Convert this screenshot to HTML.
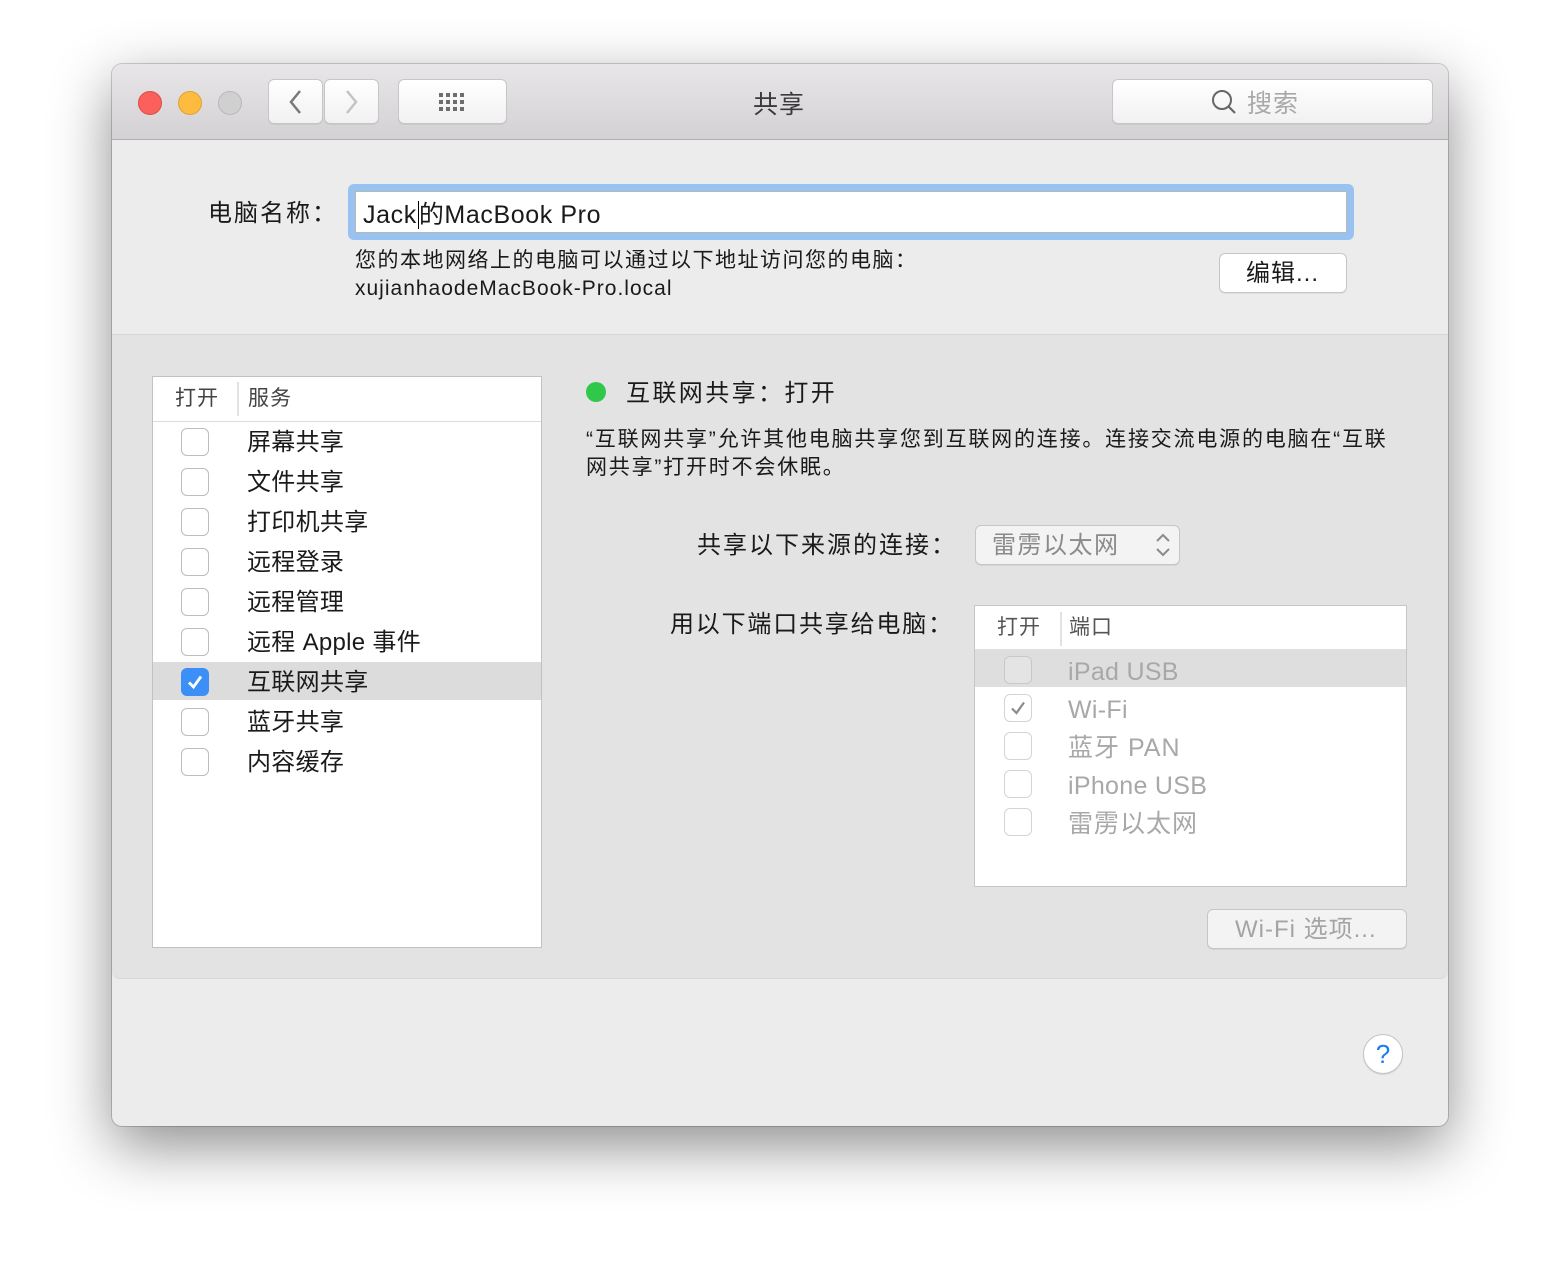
<!DOCTYPE html>
<html><head><meta charset="utf-8"><style>
*{margin:0;padding:0;box-sizing:border-box}
body{width:1560px;height:1286px;background:#fff;position:relative;overflow:hidden;font-family:"Liberation Sans","Noto Sans CJK SC",sans-serif;color:#1a1a1a;line-height:1.35}
.a{position:absolute;white-space:nowrap}
#win{position:absolute;left:112px;top:64px;width:1336px;height:1062px;background:#ececec;border-radius:10px;box-shadow:0 20px 60px rgba(0,0,0,.45),0 0 0 1px rgba(0,0,0,.18);overflow:hidden}
#tb{position:absolute;left:0;top:0;width:1336px;height:76px;background:linear-gradient(#e8e6e8,#d3d1d3);border-bottom:1px solid #b0aeb0}
.dot{position:absolute;top:27px;width:24px;height:24px;border-radius:50%}
.btn{position:absolute;background:linear-gradient(#fff,#f1f1f1);border:1px solid #c6c6c6;border-radius:6px;box-shadow:0 1px 0 rgba(0,0,0,.06)}
.cb{position:absolute;width:28px;height:28px;border:1px solid #bdbdbd;border-radius:6px;background:#fff}
.li{position:absolute;left:94px;font-size:24px;letter-spacing:0.3px}
.pl{position:absolute;left:93px;font-size:25px;color:#a8a8a8;letter-spacing:0.3px}
</style></head><body>
<div id="win">
<div id="tb">
 <div class="dot" style="left:26px;background:#fc605c;border:1px solid #de4a45"></div>
 <div class="dot" style="left:66px;background:#fdbc40;border:1px solid #dea236"></div>
 <div class="dot" style="left:106px;background:#d0d0d0;border:1px solid #b8b8b8"></div>
 <div class="btn" style="left:156px;top:15px;width:55px;height:45px"><svg width="55" height="45" style="position:absolute;left:0;top:0"><path d="M31 11 L22 22 L31 33" fill="none" stroke="#7a7a7a" stroke-width="2.5"/></svg></div>
 <div class="btn" style="left:212px;top:15px;width:55px;height:45px"><svg width="55" height="45" style="position:absolute;left:0;top:0"><path d="M22 11 L31 22 L22 33" fill="none" stroke="#c4c4c4" stroke-width="2.5"/></svg></div>
 <div class="btn" style="left:286px;top:15px;width:109px;height:45px"><svg width="109" height="45" style="position:absolute;left:0;top:0" fill="#6e6e6e"><rect x="40" y="13" width="4" height="4"/><rect x="47" y="13" width="4" height="4"/><rect x="54" y="13" width="4" height="4"/><rect x="61" y="13" width="4" height="4"/><rect x="40" y="20" width="4" height="4"/><rect x="47" y="20" width="4" height="4"/><rect x="54" y="20" width="4" height="4"/><rect x="61" y="20" width="4" height="4"/><rect x="40" y="27" width="4" height="4"/><rect x="47" y="27" width="4" height="4"/><rect x="54" y="27" width="4" height="4"/><rect x="61" y="27" width="4" height="4"/></svg></div>
 <div class="a" style="left:641px;top:25px;font-size:25px;color:#3a3a3a;letter-spacing:1px">共享</div>
 <div class="btn" style="left:1000px;top:15px;width:321px;height:45px"><svg width="30" height="30" style="position:absolute;left:97px;top:8px"><circle cx="12" cy="12" r="9" fill="none" stroke="#666" stroke-width="2"/><path d="M18.5 18.5 L25 25" stroke="#666" stroke-width="2.2"/></svg><div class="a" style="left:134px;top:8px;font-size:25px;color:#a8a8a8;letter-spacing:1px">搜索</div></div>
</div>
<div class="a" style="left:96px;top:134px;font-size:24px;letter-spacing:2px">电脑名称：</div>
<div style="position:absolute;left:236px;top:120px;width:1006px;height:56px;border-radius:6px;background:#98c3f1"></div>
<div style="position:absolute;left:243px;top:127px;width:992px;height:42px;background:#fff;border:1px solid #b8b8b8"></div>
<div class="a" style="left:251px;top:135px;font-size:25px;letter-spacing:0.6px">Jack<span style="border-left:1.5px solid #000;margin-left:1px"></span>的MacBook Pro</div>
<div class="a" style="left:243px;top:183px;font-size:21px;line-height:28px;letter-spacing:1px"><span style="letter-spacing:1.5px">您的本地网络上的电脑可以通过以下地址访问您的电脑：</span><br>xujianhaodeMacBook-Pro.local</div>
<div class="btn" style="left:1107px;top:189px;width:128px;height:40px;background:#fff"><div class="a" style="left:26px;top:4px;font-size:24px;letter-spacing:1px">编辑...</div></div>

<div style="position:absolute;left:0;top:270px;width:1336px;height:645px;background:#e3e3e3;border-top:1px solid #d6d6d6;border-bottom:1px solid #d8d8d8;border-radius:0 0 8px 8px"></div>

<div style="position:absolute;left:40px;top:312px;width:390px;height:572px;background:#fff;border:1px solid #c2c2c2">
 <div style="position:absolute;left:0;top:0;width:388px;height:45px;border-bottom:1px solid #dcdcdc"></div>
 <div class="a" style="left:22px;top:8px;font-size:21px;color:#444;letter-spacing:1px">打开</div>
 <div style="position:absolute;left:84px;top:5px;width:2px;height:34px;background:#e2e2e2"></div>
 <div class="a" style="left:95px;top:8px;font-size:21px;color:#444;letter-spacing:1px">服务</div>
 <div style="position:absolute;left:0;top:285px;width:388px;height:38px;background:#dcdcdc"></div>
 <div class="cb" style="left:28px;top:51px"></div><div class="li" style="top:50px">屏幕共享</div>
 <div class="cb" style="left:28px;top:91px"></div><div class="li" style="top:90px">文件共享</div>
 <div class="cb" style="left:28px;top:131px"></div><div class="li" style="top:130px">打印机共享</div>
 <div class="cb" style="left:28px;top:171px"></div><div class="li" style="top:170px">远程登录</div>
 <div class="cb" style="left:28px;top:211px"></div><div class="li" style="top:210px">远程管理</div>
 <div class="cb" style="left:28px;top:251px"></div><div class="li" style="top:250px">远程 Apple 事件</div>
 <div class="cb" style="left:28px;top:291px;background:#3b8ff7;border-color:#3b8ff7"><svg width="28" height="28" style="position:absolute;left:-1px;top:-1px"><path d="M8 14.5 L12.5 19 L20 8.5" fill="none" stroke="#fff" stroke-width="2.8"/></svg></div><div class="li" style="top:290px">互联网共享</div>
 <div class="cb" style="left:28px;top:331px"></div><div class="li" style="top:330px">蓝牙共享</div>
 <div class="cb" style="left:28px;top:371px"></div><div class="li" style="top:370px">内容缓存</div>
</div>

<div style="position:absolute;left:474px;top:318px;width:20px;height:20px;border-radius:50%;background:#2fc84a"></div>
<div class="a" style="left:514px;top:314px;font-size:24px;letter-spacing:2.4px">互联网共享：打开</div>
<div class="a" style="left:474px;top:362px;font-size:21px;line-height:28px;letter-spacing:1.8px">“互联网共享”允许其他电脑共享您到互联网的连接。连接交流电源的电脑在“互联<br>网共享”打开时不会休眠。</div>
<div class="a" style="left:585px;top:466px;font-size:24px;letter-spacing:2px">共享以下来源的连接：</div>
<div class="btn" style="left:863px;top:461px;width:205px;height:40px;background:#f3f3f3"><div class="a" style="left:16px;top:4px;font-size:24px;color:#8a8a8a;letter-spacing:1.5px">雷雳以太网</div><svg width="20" height="30" style="position:absolute;left:178px;top:4px"><path d="M3 11 L9 5 L15 11 M3 19 L9 25 L15 19" fill="none" stroke="#8a8a8a" stroke-width="2"/></svg></div>
<div class="a" style="left:558px;top:545px;font-size:24px;letter-spacing:1.8px">用以下端口共享给电脑：</div>
<div style="position:absolute;left:862px;top:541px;width:433px;height:282px;background:#fff;border:1px solid #c6c6c6">
 <div style="position:absolute;left:0;top:0;width:431px;height:44px;border-bottom:1px solid #e0e0e0"></div>
 <div class="a" style="left:22px;top:8px;font-size:21px;color:#555;letter-spacing:1px">打开</div>
 <div style="position:absolute;left:85px;top:6px;width:2px;height:34px;background:#e2e2e2"></div>
 <div class="a" style="left:94px;top:8px;font-size:21px;color:#555;letter-spacing:1px">端口</div>
 <div style="position:absolute;left:0;top:44px;width:431px;height:37px;background:#dedede"></div>
 <div class="cb" style="left:29px;top:50px;background:#e4e4e4;border-color:#c8c8c8"></div><div class="pl" style="top:50px">iPad USB</div>
 <div class="cb" style="left:29px;top:88px;border-color:#d4d4d4"><svg width="28" height="28" style="position:absolute;left:-1px;top:-1px"><path d="M8 14.5 L12.5 19 L20 8.5" fill="none" stroke="#8c8c8c" stroke-width="2.2"/></svg></div><div class="pl" style="top:88px">Wi-Fi</div>
 <div class="cb" style="left:29px;top:126px;border-color:#d4d4d4"></div><div class="pl" style="top:126px;letter-spacing:1px">蓝牙 PAN</div>
 <div class="cb" style="left:29px;top:164px;border-color:#d4d4d4"></div><div class="pl" style="top:164px">iPhone USB</div>
 <div class="cb" style="left:29px;top:202px;border-color:#d4d4d4"></div><div class="pl" style="top:202px;letter-spacing:1px">雷雳以太网</div>
</div>
<div class="btn" style="left:1095px;top:845px;width:200px;height:40px;background:#f3f3f3"><div class="a" style="left:27px;top:4px;font-size:24px;color:#a4a4a4;letter-spacing:1px">Wi-Fi 选项...</div></div>
<div style="position:absolute;left:1251px;top:970px;width:40px;height:40px;border-radius:50%;background:#fff;border:1px solid #c4c4c4;box-shadow:0 1px 1px rgba(0,0,0,.1);text-align:center;font-size:26px;line-height:38px;color:#1a7cf5">?</div>
</div>
</body></html>
